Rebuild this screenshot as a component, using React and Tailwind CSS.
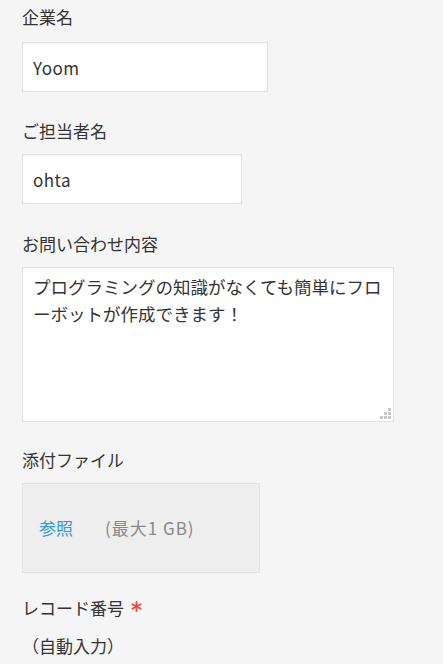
import { useState } from "react";

const font = { fontFamily: '"Noto Sans CJK JP", "Noto Sans", sans-serif' };

function Label({ children, required }) {
  return (
    <div className="flex items-center text-[17px] leading-[24px] text-[#333]">
      {children}
      {required && (
        <svg className="ml-[7px] mb-[4px]" width="11" height="11" viewBox="0 0 12 12">
          <g stroke="#e74c3c" strokeWidth="2" strokeLinecap="round">
            <line x1="6" y1="1" x2="6" y2="11" />
            <line x1="1.5" y1="3.5" x2="10.5" y2="8.5" />
            <line x1="1.5" y1="8.5" x2="10.5" y2="3.5" />
          </g>
        </svg>
      )}
    </div>
  );
}

export default function App() {
  const [company, setCompany] = useState("Yoom");
  const [person, setPerson] = useState("ohta");
  const [body, setBody] = useState(
    "プログラミングの知識がなくても簡単にフローボットが作成できます！"
  );

  return (
    <div className="min-h-screen bg-[#f5f5f5] pl-[22px] pt-[5px]" style={font}>
      <Label>企業名</Label>
      <input
        value={company}
        onChange={(e) => setCompany(e.target.value)}
        className="mt-[13px] block h-[50px] w-[246px] border border-[#e3e3e3] bg-white px-[10px] text-[17px] tracking-[0.5px] text-[#333] shadow-[inset_0_1px_2px_rgba(0,0,0,0.04)] outline-none"
      />

      <div className="mt-[27px]">
        <Label>ご担当者名</Label>
      </div>
      <input
        value={person}
        onChange={(e) => setPerson(e.target.value)}
        className="mt-[11px] block h-[50px] w-[220px] border border-[#e3e3e3] bg-white px-[10px] text-[17px] tracking-[0.5px] text-[#333] shadow-[inset_0_1px_2px_rgba(0,0,0,0.04)] outline-none"
      />

      <div className="mt-[28px]">
        <Label>お問い合わせ内容</Label>
      </div>
      <div className="relative mt-[11px] w-[372px]">
        <textarea
          value={body}
          onChange={(e) => setBody(e.target.value)}
          className="block h-[155px] w-full resize-none border border-[#e3e3e3] bg-white px-[10px] py-[5px] text-[17.5px] leading-[27px] text-[#333] shadow-[inset_0_1px_2px_rgba(0,0,0,0.04)] outline-none"
        />
        <svg className="absolute bottom-[2px] right-[2px]" width="12" height="12" viewBox="0 0 12 12">
          <g fill="#c8c8c8">
            <rect x="8" y="0" width="3" height="3" />
            <rect x="8" y="4" width="3" height="3" />
            <rect x="4" y="4" width="3" height="3" />
            <rect x="8" y="8" width="3" height="3" />
            <rect x="4" y="8" width="3" height="3" />
            <rect x="0" y="8" width="3" height="3" />
          </g>
        </svg>
      </div>

      <div className="mt-[26px]">
        <Label>添付ファイル</Label>
      </div>
      <div className="mt-[11px] flex h-[90px] w-[238px] items-center border border-[#e3e3e3] bg-[#eeeeee] pl-[16px] text-[17px]">
        <span className="text-[#3498db]">参照</span>
        <span className="ml-[32px] tracking-[1px] text-[#888]">(最大1 GB)</span>
      </div>

      <div className="mt-[23px]">
        <Label required>レコード番号</Label>
      </div>
      <div className="mt-[14px] text-[17px] leading-[24px] text-[#333]">（自動入力）</div>
    </div>
  );
}
